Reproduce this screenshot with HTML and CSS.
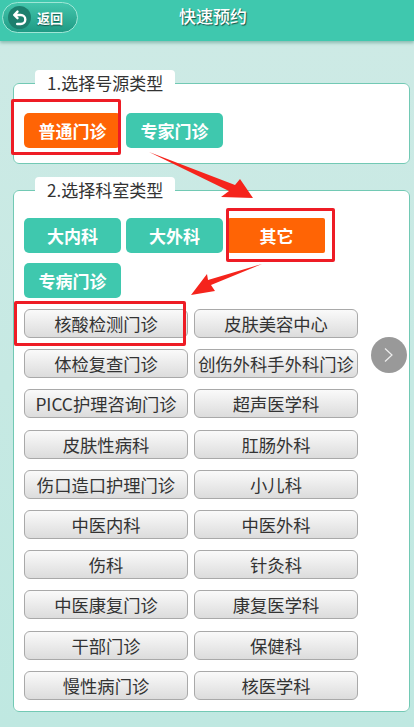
FILE: index.html
```html
<!DOCTYPE html>
<html lang="zh">
<head>
<meta charset="utf-8">
<title>快速预约</title>
<link rel="stylesheet" href="styles.css">
</head>
<body>
<header class="topbar">
  <a class="back">
    <span class="back-icon">
      <svg width="18" height="18" viewBox="0 0 18 18"><path d="M6.5 2.6 3.2 6 6.5 9.2M3.6 6h6.2a4 4 0 0 1 0 9H6.2" fill="none" stroke="#fff" stroke-width="2.4" stroke-linecap="round" stroke-linejoin="round"/></svg>
    </span>
    <span class="back-text">返回</span>
  </a>
  <h1 class="title">快速预约</h1>
</header>
<main class="content">
  <fieldset class="panel panel-source">
    <legend class="panel-title">1.选择号源类型</legend>
    <div class="types">
      <button class="type active">普通门诊</button>
      <button class="type">专家门诊</button>
    </div>
  </fieldset>
  <fieldset class="panel panel-dept">
    <legend class="panel-title">2.选择科室类型</legend>
    <div class="types">
      <button class="type">大内科</button>
      <button class="type">大外科</button>
      <button class="type active square">其它</button>
      <button class="type">专病门诊</button>
    </div>
    <div class="depts">
      <button class="dept">核酸检测门诊</button>
      <button class="dept">皮肤美容中心</button>
      <button class="dept">体检复查门诊</button>
      <button class="dept">创伤外科手外科门诊</button>
      <button class="dept">PICC护理咨询门诊</button>
      <button class="dept">超声医学科</button>
      <button class="dept">皮肤性病科</button>
      <button class="dept">肛肠外科</button>
      <button class="dept">伤口造口护理门诊</button>
      <button class="dept">小儿科</button>
      <button class="dept">中医内科</button>
      <button class="dept">中医外科</button>
      <button class="dept">伤科</button>
      <button class="dept">针灸科</button>
      <button class="dept">中医康复门诊</button>
      <button class="dept">康复医学科</button>
      <button class="dept">干部门诊</button>
      <button class="dept">保健科</button>
      <button class="dept">慢性病门诊</button>
      <button class="dept">核医学科</button>
    </div>
  </fieldset>
</main>
<div class="next">
  <svg width="14" height="20" viewBox="0 0 14 20"><path d="M3 3.5 10 10 3 16.5" fill="none" stroke="#eee" stroke-width="1.2"/></svg>
</div>
<div class="mark mark-1"></div>
<div class="mark mark-2"></div>
<div class="mark mark-3"></div>
<svg class="arrows" width="414" height="727" viewBox="0 0 414 727">
  <polygon points="149,152 235,185 240,179 253,198 221,197 229,191" fill="#f5241c"/>
  <polygon points="262,264 211,285 215,291 191,295 207,274 208,280" fill="#f5241c"/>
</svg>
</body>
</html>
```
FILE: styles.css
```css
* { box-sizing: border-box; }
html, body { margin: 0; height: 727px; overflow: hidden; }
body {
  position: relative;
  font-family: "Noto Sans CJK SC", "Liberation Sans", sans-serif;
  background: linear-gradient(180deg, #cdeae5 40px, #bfe8e1 100%);
  color: #333;
}
.topbar {
  height: 41px;
  background: #3fc8ae;
  box-shadow: 0 2px 3px rgba(60, 130, 115, .45);
  display: flex;
  align-items: flex-start;
  padding: 2px 0 0 2px;
  position: relative;
}
.back {
  width: 76px;
  height: 31px;
  border: 1px solid #9fe6d6;
  border-radius: 16px;
  background: linear-gradient(180deg, #43c6ac, #1f9a84);
  display: flex;
  align-items: center;
  gap: 6px;
  padding-left: 5px;
}
.back-icon {
  width: 23px;
  height: 23px;
  border-radius: 50%;
  background: #1d7f6e;
  display: flex;
  align-items: center;
  justify-content: center;
}
.back-text {
  font-size: 13px;
  font-weight: 700;
  color: #fff;
  text-shadow: 0 1px 1px rgba(0, 0, 0, .5);
}
.title {
  position: absolute;
  left: 12px;
  right: 0;
  top: 3px;
  margin: 0;
  text-align: center;
  font-size: 17px;
  line-height: 25px;
  font-weight: 500;
  color: #fff;
  text-shadow: 1px 1px 1px rgba(0, 0, 0, .6);
}
.content {
  padding: 29px 4px 0 13px;
  display: flex;
  flex-direction: column;
  gap: 13px;
}
.panel {
  margin: 0;
  padding: 0 10px;
  min-width: 0;
  border: 1.5px solid #72c9b4;
  border-radius: 6px;
  background: #fff;
}
.panel-source { height: 94px; }
.panel-dept { height: 535px; }
.panel-title {
  margin-left: 11px;
  padding: 0 12px;
  height: 26px;
  width: 140px;
  font-size: 17px;
  line-height: 25px;
  color: #333;
  background: #fff;
  border-radius: 4px 4px 0 0;
  white-space: nowrap;
}
.types {
  display: flex;
  flex-wrap: wrap;
  gap: 10px 5px;
  width: 320px;
  padding-top: 17px;
}
.panel-dept .types { padding-top: 15px; }
.type {
  width: 97px;
  height: 35px;
  padding: 0;
  border: 0;
  border-radius: 5px;
  background: #3fc8ae;
  color: #fff;
  font: 700 17px/35px "Noto Sans CJK SC", sans-serif;
}
.type.active { background: #ff6405; color: #fff; }
.type.square { border-radius: 2px; }
.depts {
  display: grid;
  grid-template-columns: 164px 164px;
  grid-auto-rows: 29px;
  gap: 11.2px 6px;
  margin-top: 11px;
}
.dept {
  padding: 0;
  border: 1px solid #a9a9a9;
  border-radius: 6px;
  background: linear-gradient(180deg, #fafafa, #dcdcdc);
  color: #333;
  font: 400 17.3px/27px "Noto Sans CJK SC", sans-serif;
  white-space: nowrap;
}
.next {
  position: absolute;
  left: 371px;
  top: 337px;
  width: 36px;
  height: 36px;
  border-radius: 50%;
  background: #999;
  display: flex;
  align-items: center;
  justify-content: center;
}
.mark {
  position: absolute;
  border: 3px solid #ee1c25;
  border-radius: 2px;
}
.mark-1 { left: 11px; top: 99px; width: 110px; height: 56px; }
.mark-2 { left: 226px; top: 208px; width: 109px; height: 54px; }
.mark-3 { left: 14px; top: 301px; width: 172px; height: 45px; }
.arrows { position: absolute; left: 0; top: 0; pointer-events: none; }
```
